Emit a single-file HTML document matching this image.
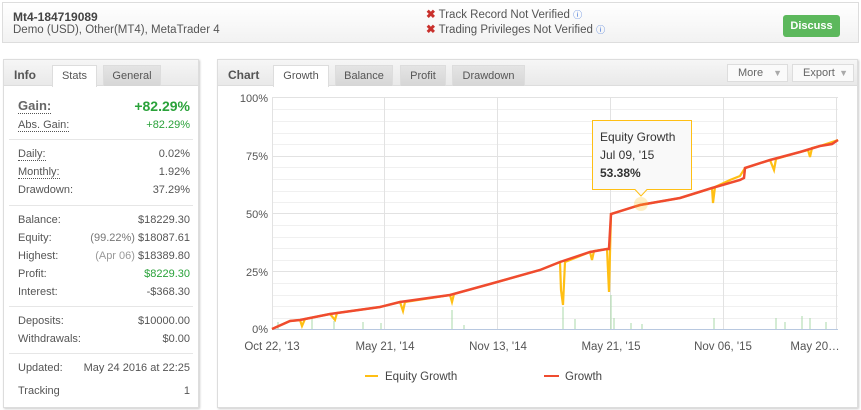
<!DOCTYPE html>
<html><head><meta charset="utf-8"><style>
*{box-sizing:border-box;margin:0;padding:0}
body{width:861px;height:410px;background:#fff;font-family:"Liberation Sans",Verdana,sans-serif;font-size:11px;color:#555;position:relative;overflow:hidden}
.abs{position:absolute}
.hdr{left:2px;top:2px;width:857px;height:41px;border:1px solid #ddd;background:linear-gradient(#fff,#f2f2f2)}
.panel{border:1px solid #ddd;box-shadow:1px 1px 2px #ccc;background:#fff}
.tabbar{left:0;top:0;right:0;height:26px;background:linear-gradient(#f6f6f6,#e9e9e9);border-bottom:1px solid #ddd}
.tab{top:5px;height:21px;border:1px solid #ddd;border-bottom:none;background:linear-gradient(#e4e4e4,#d6d6d6);text-align:center;line-height:20px;font-size:11px;color:#555}
.tab.on{background:#fff;height:22px}
.row{position:absolute;left:14px;width:172px;font-size:11px;color:#555}
.row span.r{position:absolute;right:0}
.dot{border-bottom:1px dotted #555}
.sep{position:absolute;left:5px;width:184px;height:1px;background:#e6e6e6}
.g{color:#2aa23a}
.btn{top:12px;right:18px;width:57px;height:22px;background:#5cb85c;border-radius:3px;color:#fff;font-weight:bold;text-align:center;line-height:22px}
.dd{top:4px;height:18px;border:1px solid #ddd;background:#fafafa;line-height:16px;font-size:11px;color:#666;padding-left:10px}
</style></head><body>
<div class="abs hdr">
 <div class="abs" style="left:10px;top:7px;font-weight:bold;font-size:12px;color:#444">Mt4-184719089</div>
 <div class="abs" style="left:10px;top:21px;font-size:11.5px;color:#555">Demo (USD), Other(MT4), MetaTrader 4</div>
 <div class="abs" style="left:423px;top:4px;font-size:11.5px"><span style="color:#c9302c;font-weight:bold">✖</span> Track Record Not Verified <span style="color:#3a6fd8;font-size:9px">ⓘ</span></div>
 <div class="abs" style="left:423px;top:19px;font-size:11.5px"><span style="color:#c9302c;font-weight:bold">✖</span> Trading Privileges Not Verified <span style="color:#3a6fd8;font-size:9px">ⓘ</span></div>
 <div class="abs btn">Discuss</div>
</div>

<div class="abs panel" style="left:3px;top:59px;width:196px;height:349px">
 <div class="abs tabbar"></div>
 <div class="abs" style="left:10px;top:8px;font-weight:bold;font-size:12px;color:#555">Info</div>
 <div class="abs tab on" style="left:48px;width:45px">Stats</div>
 <div class="abs tab" style="left:99px;width:58px">General</div>
 <div class="row" style="top:38px;font-size:13px;font-weight:bold;color:#666"><span class="dot">Gain:</span><span class="r g" style="font-size:14px">+82.29%</span></div>
 <div class="row" style="top:59px"><span class="dot">Abs. Gain:</span><span class="r g">+82.29%</span></div>
 <div class="sep" style="top:79px"></div>
 <div class="row" style="top:88px"><span class="dot">Daily:</span><span class="r">0.02%</span></div>
 <div class="row" style="top:106px"><span class="dot">Monthly:</span><span class="r">1.92%</span></div>
 <div class="row" style="top:124px">Drawdown:<span class="r">37.29%</span></div>
 <div class="sep" style="top:145px"></div>
 <div class="row" style="top:154px">Balance:<span class="r">$18229.30</span></div>
 <div class="row" style="top:172px">Equity:<span class="r"><span style="color:#777">(99.22%)</span> $18087.61</span></div>
 <div class="row" style="top:190px">Highest:<span class="r"><span style="color:#999">(Apr 06)</span> $18389.80</span></div>
 <div class="row" style="top:208px">Profit:<span class="r g">$8229.30</span></div>
 <div class="row" style="top:226px">Interest:<span class="r">-$368.30</span></div>
 <div class="sep" style="top:246px"></div>
 <div class="row" style="top:255px">Deposits:<span class="r">$10000.00</span></div>
 <div class="row" style="top:273px">Withdrawals:<span class="r">$0.00</span></div>
 <div class="sep" style="top:293px"></div>
 <div class="row" style="top:302px">Updated:<span class="r">May 24 2016 at 22:25</span></div>
 <div class="row" style="top:325px">Tracking<span class="r">1</span></div>
</div>

<div class="abs panel" style="left:217px;top:59px;width:641px;height:349px">
 <div class="abs tabbar"></div>
 <div class="abs" style="left:10px;top:8px;font-weight:bold;font-size:12px;color:#555">Chart</div>
 <div class="abs tab on" style="left:55px;width:56px">Growth</div>
 <div class="abs tab" style="left:117px;width:58px">Balance</div>
 <div class="abs tab" style="left:182px;width:46px">Profit</div>
 <div class="abs tab" style="left:234px;width:73px">Drawdown</div>
 <div class="abs dd" style="left:509px;width:61px">More <span style="color:#aaa;font-size:9px;position:absolute;right:5px">▼</span></div>
 <div class="abs dd" style="left:574px;width:62px">Export <span style="color:#aaa;font-size:9px;position:absolute;right:5px">▼</span></div>
</div>

<svg class="abs" style="left:0;top:0" width="861" height="410">
 <g stroke="#f0f0f0" stroke-width="1">
  <line x1="272" x2="838" y1="109.5" y2="109.5"/><line x1="272" x2="838" y1="121.5" y2="121.5"/><line x1="272" x2="838" y1="133.5" y2="133.5"/><line x1="272" x2="838" y1="144.5" y2="144.5"/>
  <line x1="272" x2="838" y1="167.5" y2="167.5"/><line x1="272" x2="838" y1="179.5" y2="179.5"/><line x1="272" x2="838" y1="191.5" y2="191.5"/><line x1="272" x2="838" y1="202.5" y2="202.5"/>
  <line x1="272" x2="838" y1="225.5" y2="225.5"/><line x1="272" x2="838" y1="237.5" y2="237.5"/><line x1="272" x2="838" y1="248.5" y2="248.5"/><line x1="272" x2="838" y1="260.5" y2="260.5"/>
  <line x1="272" x2="838" y1="283.5" y2="283.5"/><line x1="272" x2="838" y1="295.5" y2="295.5"/><line x1="272" x2="838" y1="306.5" y2="306.5"/><line x1="272" x2="838" y1="318.5" y2="318.5"/>
 </g>
 <g stroke="#e2e2e2" stroke-width="1">
  <line x1="272" x2="838" y1="97.5" y2="97.5"/><line x1="272" x2="838" y1="156.5" y2="156.5"/><line x1="272" x2="838" y1="213.5" y2="213.5"/><line x1="272" x2="838" y1="271.5" y2="271.5"/>
  <line x1="272.5" x2="272.5" y1="97" y2="329"/><line x1="384.5" x2="384.5" y1="97" y2="329"/><line x1="497.5" x2="497.5" y1="97" y2="329"/><line x1="610.5" x2="610.5" y1="97" y2="329"/><line x1="723.5" x2="723.5" y1="97" y2="329"/><line x1="836.5" x2="836.5" y1="97" y2="329"/>
 </g>
 <g stroke="#a8d8a8" stroke-width="1">
  <line x1="278" x2="278" y1="329" y2="322"/><line x1="312" x2="312" y1="329" y2="318"/><line x1="334" x2="334" y1="329" y2="321"/><line x1="363" x2="363" y1="329" y2="322"/><line x1="381" x2="381" y1="329" y2="323"/><line x1="452" x2="452" y1="329" y2="310"/><line x1="464" x2="464" y1="329" y2="325"/><line x1="563" x2="563" y1="329" y2="307"/><line x1="575" x2="575" y1="329" y2="319"/><line x1="611" x2="611" y1="329" y2="295"/><line x1="614" x2="614" y1="329" y2="318"/><line x1="631" x2="631" y1="329" y2="323"/><line x1="642" x2="642" y1="329" y2="324"/><line x1="714" x2="714" y1="329" y2="318"/><line x1="776" x2="776" y1="329" y2="318"/><line x1="785" x2="785" y1="329" y2="322"/><line x1="802" x2="802" y1="329" y2="316"/><line x1="810" x2="810" y1="329" y2="318"/><line x1="826" x2="826" y1="329" y2="322"/>
 </g>
 <line x1="272" x2="838" y1="329.5" y2="329.5" stroke="#b8c8e0"/>
 <polyline fill="none" stroke="#ffbf14" stroke-width="2.2" points="272,329 290,321 300,320 302,326 305,319 330,314 335,320 337,313 380,307 400,302 403,311 405,302 450,295 452,302 454,294 490,284 540,270 560,262 561,290 563,305 565,262 590,252 592,260 594,251 607,249 609,292 611,214 640,205 680,198 700,192 712,188 713,203 715,187 730,180 740,176 745,168 770,160 774,170 776,159 800,152 808,150 810,157 812,148 820,146 838,140"/>
 <polyline fill="none" stroke="#ef4b2f" stroke-width="2.5" points="272,329 290,321 300,320 330,314 380,307 400,302 450,295 490,284 540,270 560,262 590,252 607,249 609,249 611,214 640,205 680,198 712,188 740,180 744,178 745,168 770,160 800,152 820,146 832,144 838,140"/>
 <circle cx="641" cy="204" r="7" fill="#ffbf14" opacity="0.25"/>
 <path d="M592.5,120.5 H691.5 V189.5 H647 L641,196 L635,189.5 H592.5 Z" fill="#f9f9f9" stroke="#ffbf14" stroke-width="1"/>
 <text x="600" y="141" font-family="Liberation Sans,sans-serif" font-size="12" fill="#333">Equity Growth</text>
 <text x="600" y="159" font-family="Liberation Sans,sans-serif" font-size="12" fill="#333">Jul 09, '15</text>
 <text x="600" y="177" font-family="Liberation Sans,sans-serif" font-size="12" font-weight="bold" fill="#333">53.38%</text>
 <g font-family="Liberation Sans,sans-serif" font-size="11" fill="#555" text-anchor="end">
  <text x="268" y="102">100%</text><text x="268" y="160">75%</text><text x="268" y="218">50%</text><text x="268" y="276">25%</text><text x="268" y="333">0%</text>
 </g>
 <g font-family="Liberation Sans,sans-serif" font-size="11.5" fill="#555" text-anchor="middle">
  <text x="272" y="350">Oct 22, '13</text><text x="385" y="350">May 21, '14</text><text x="498" y="350">Nov 13, '14</text><text x="611" y="350">May 21, '15</text><text x="723" y="350">Nov 06, '15</text><text x="815" y="350">May 20…</text>
 </g>
 <line x1="365" x2="378" y1="376" y2="376" stroke="#ffbf14" stroke-width="2"/>
 <text x="385" y="380" font-family="Liberation Sans,sans-serif" font-size="11.5" fill="#444">Equity Growth</text>
 <line x1="544" x2="559" y1="376" y2="376" stroke="#ef4b2f" stroke-width="2"/>
 <text x="565" y="380" font-family="Liberation Sans,sans-serif" font-size="11.5" fill="#444">Growth</text>
</svg>
</body></html>
